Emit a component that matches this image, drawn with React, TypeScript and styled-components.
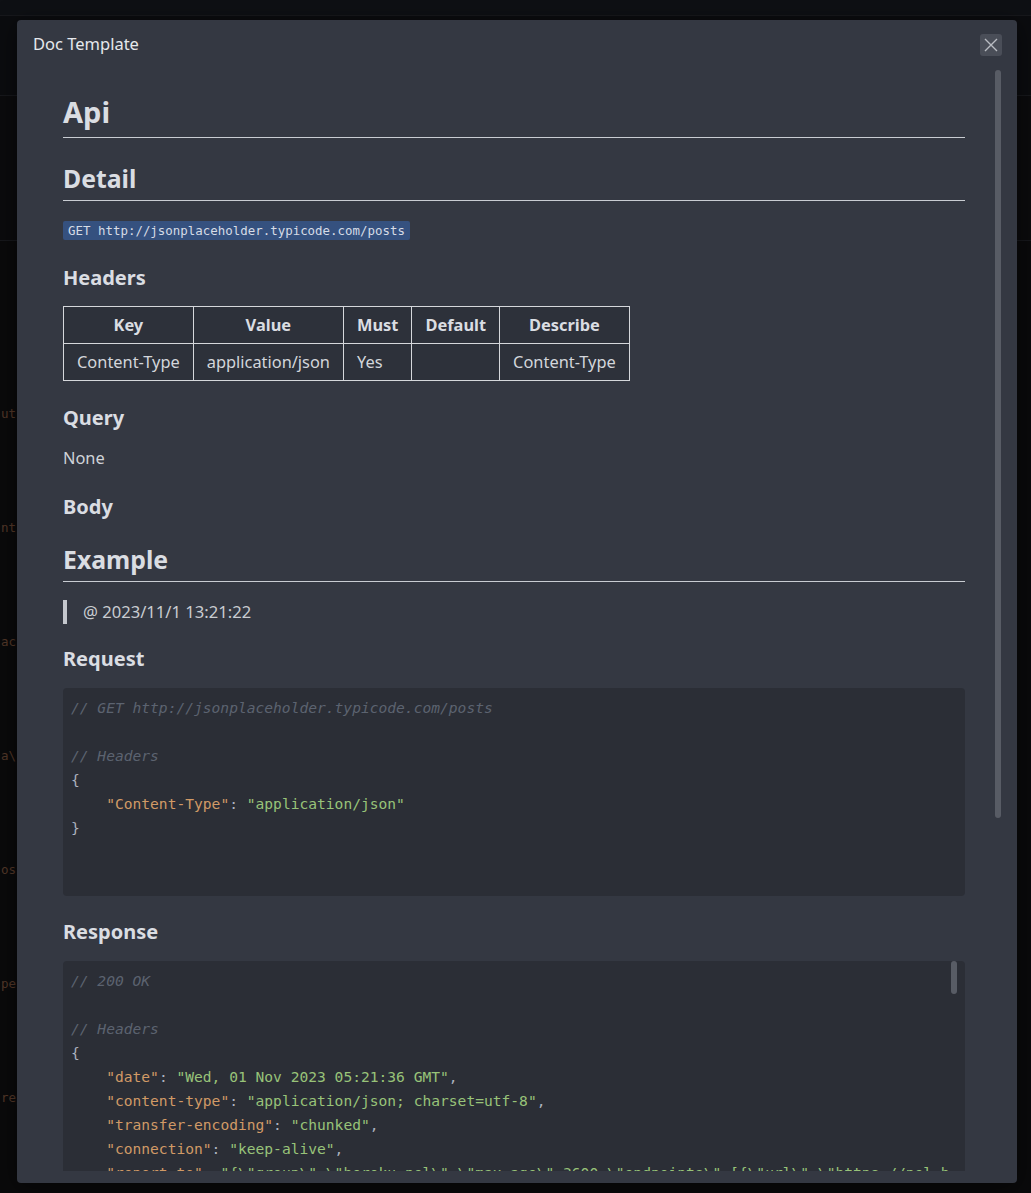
import React from 'react'
import styled, { createGlobalStyle } from 'styled-components'

type Kind = 'c' | 'k' | 's' | 'p' | 'n'
type Seg = [Kind, string]
type Line = Seg[]

const GlobalStyle = createGlobalStyle`
    html,
    body {
        margin: 0;
        padding: 0;
        background: #0a0a0b;
    }
    body {
        font-family: "Noto Sans", "Open Sans", sans-serif;
    }
`

const Page = styled.div`
    position: relative;
    width: 100%;
    height: 1193px;
    overflow: hidden;
    background: #0a0a0b;
`

const Backdrop = styled.div`
    display: flex;
    flex-direction: column;
    height: 100%;
`

const Band = styled.div<{ $h: number; $bg: string }>`
    height: ${(p) => p.$h}px;
    flex-shrink: 0;
    background: ${(p) => p.$bg};
    border-bottom: 1px solid #17181c;
`

const Ghost = styled.div`
    display: flex;
    flex-direction: column;
    padding-top: 115px;
    font-family: "DejaVu Sans Mono", monospace;
    font-size: 12.5px;
    color: #533829;
`

const GhostRow = styled.div`
    height: 114px;
    display: flex;
    align-items: center;
    padding-left: 1px;
    white-space: pre;
`

const Modal = styled.div`
    position: absolute;
    top: 20px;
    left: 17px;
    width: 1000px;
    height: 1163px;
    display: flex;
    flex-direction: column;
    padding-bottom: 12px;
    box-sizing: border-box;
    background: #343842;
    border-radius: 4px;
    box-shadow: 0 4px 24px rgba(0, 0, 0, 0.5);
`

const Header = styled.div`
    height: 50px;
    flex-shrink: 0;
    display: flex;
    align-items: center;
    justify-content: space-between;
    padding: 0 15px 0 16px;
`

const Title = styled.div`
    font-size: 16.5px;
    color: #e6e8ec;
    margin-top: -4px;
`

const Close = styled.button`
    width: 22px;
    height: 22px;
    padding: 0;
    border: none;
    border-radius: 3px;
    background: #4a4e58;
    display: flex;
    align-items: center;
    justify-content: center;
    cursor: pointer;
`

const Body = styled.div`
    flex: 1;
    min-height: 0;
    overflow: hidden;
    padding: 0 52px 17px 46px;
    color: #d0d3d8;
    font-size: 16.4px;
`

const Thumb = styled.div<{ $top: number; $right: number; $h: number }>`
    position: absolute;
    top: ${(p) => p.$top}px;
    right: ${(p) => p.$right}px;
    width: 6px;
    height: ${(p) => p.$h}px;
    border-radius: 3px;
    background: #585c65;
`

const H1 = styled.h1<{ $top: number }>`
    margin: ${(p) => p.$top}px 0 0;
    font-size: 29px;
    line-height: 40px;
    font-weight: 700;
    color: #dadde2;
    padding-bottom: 5px;
    border-bottom: 1px solid #c9ccd2;
`

const H2 = styled.h2<{ $top: number }>`
    margin: ${(p) => p.$top}px 0 0;
    font-size: 24.8px;
    line-height: 34px;
    font-weight: 700;
    color: #dadde2;
    padding-bottom: 5px;
    border-bottom: 1px solid #c9ccd2;
`

const H3 = styled.h3<{ $top: number }>`
    margin: ${(p) => p.$top}px 0 0;
    font-size: 20px;
    line-height: 28px;
    font-weight: 700;
    color: #dadde2;
`

const Para = styled.p<{ $top: number }>`
    margin: ${(p) => p.$top}px 0 0;
    line-height: 24px;
`

const InlineCode = styled.code`
    display: inline-block;
    height: 19px;
    line-height: 19px;
    padding: 0 5px;
    vertical-align: top;
    border-radius: 2px;
    background: #35517f;
    color: #d6dce6;
    font-family: "DejaVu Sans Mono", monospace;
    font-size: 12.45px;
`

const Table = styled.table`
    margin-top: 14px;
    border-collapse: collapse;
    background: #2d313a;
    color: #d3d6db;

    th,
    td {
        border: 1px solid #d5d7db;
        padding: 6px 13px;
        line-height: 24px;
        font-size: 16.4px;
    }
    th {
        font-weight: 700;
        text-align: center;
        color: #dadde2;
    }
    td {
        text-align: left;
    }
`

const Quote = styled.blockquote`
    margin: 18px 0 0;
    padding-left: 16px;
    border-left: 4px solid #c4c7cd;
    line-height: 24px;
    font-size: 16.6px;
    color: #c9ccd1;
`

const CodeBox = styled.div`
    margin-top: 15px;
    padding: 8px;
    border-radius: 4px;
    background: #2b2e36;
    overflow: hidden;
`

const ScrollBox = styled.div`
    position: relative;
    margin-top: 15px;
    padding-right: 14px;
    border-radius: 4px;
    background: #2b2e36;
`

const ScrollInner = styled.div`
    height: 712px;
    overflow: hidden;
    padding: 8px 0 8px 8px;
    box-sizing: border-box;
`

const CodeLine = styled.div`
    height: 24px;
    line-height: 24px;
    white-space: pre;
    font-family: "DejaVu Sans Mono", monospace;
    font-size: 14.6px;
    color: #abb2bf;
`

const tokenColors: Record<Kind, string> = {
    c: '#5c6370',
    k: '#d19a66',
    s: '#98c379',
    p: '#abb2bf',
    n: '#d19a66',
}

const Token = styled.span<{ $kind: Kind }>`
    color: ${(p) => tokenColors[p.$kind]};
    font-style: ${(p) => (p.$kind === 'c' ? 'italic' : 'normal')};
`

const comment = (t: string): Line => [['c', t]]
const blank: Line = []
const punct = (t: string): Line => [['p', t]]
const pair = (ind: string, k: string, v: string | number, last = false): Line => [
    ['p', ind],
    ['k', `"${k}"`],
    ['p', ': '],
    typeof v === 'number' ? ['n', String(v)] : ['s', JSON.stringify(v)],
    ['p', last ? '' : ','],
]

const requestLines: Line[] = [
    comment('// GET http://jsonplaceholder.typicode.com/posts'),
    blank,
    comment('// Headers'),
    punct('{'),
    pair('    ', 'Content-Type', 'application/json', true),
    punct('}'),
    blank,
    blank,
]

const sid = 'e11707d5-02a7-43ef-b45e-2cf4d2036f7d'
const headers: [string, string][] = [
    ['date', 'Wed, 01 Nov 2023 05:21:36 GMT'],
    ['content-type', 'application/json; charset=utf-8'],
    ['transfer-encoding', 'chunked'],
    ['connection', 'keep-alive'],
    [
        'report-to',
        `{"group":"heroku-nel","max_age":3600,"endpoints":[{"url":"https://nel.heroku.com/reports?ts=1698816096&sid=${sid}"}]}`,
    ],
    ['reporting-endpoints', `heroku-nel=https://nel.heroku.com/reports?ts=1698816096&sid=${sid}`],
    [
        'nel',
        '{"report_to":"heroku-nel","max_age":3600,"success_fraction":0.005,"failure_fraction":0.05,"response_headers":["Via"]}',
    ],
    ['x-powered-by', 'Express'],
    ['x-ratelimit-limit', '1000'],
    ['x-ratelimit-remaining', '999'],
    ['x-ratelimit-reset', '1698816141'],
    ['vary', 'Origin, Accept-Encoding'],
    ['access-control-allow-credentials', 'true'],
    ['cache-control', 'max-age=43200'],
    ['pragma', 'no-cache'],
    ['expires', '-1'],
    ['x-content-type-options', 'nosniff'],
    ['etag', 'W/"6b80-Ybsq/K6GwwqrYkAsFxqDXGC7DoM"'],
    ['via', '1.1 vegur'],
    ['cf-cache-status', 'HIT'],
    ['age', '6284'],
    ['server', 'cloudflare'],
    ['cf-ray', '81f0c3a7cbd1163a-HKG'],
    ['alt-svc', 'h3=":443"; ma=86400'],
]

const titles = [
    'sunt aut facere repellat provident occaecati excepturi optio reprehenderit',
    'qui est esse',
    'ea molestias quasi exercitationem repellat qui ipsa sit aut',
    'eum et est occaecati',
    'nesciunt quas odio',
]
const bodies = [
    'quia et suscipit\nsuscipit recusandae consequuntur expedita et cum\nreprehenderit molestiae ut ut quas totam',
    'est rerum tempore vitae\nsequi sint nihil reprehenderit dolor beatae ea dolores neque',
    'et iusto sed quo iure\nvoluptatem occaecati omnis eligendi aut ad',
]

// only the first lines are on screen, the rest just fills the scroll area
const responseLines: Line[] = [
    comment('// 200 OK'),
    blank,
    comment('// Headers'),
    punct('{'),
    ...headers.map(([k, v], i) => pair('    ', k, v, i === headers.length - 1)),
    punct('}'),
    blank,
    comment('// Body'),
    punct('['),
]
for (let id = 1; id <= 4; id++) {
    responseLines.push(punct('    {'))
    responseLines.push(pair('        ', 'userId', 1))
    responseLines.push(pair('        ', 'id', id))
    responseLines.push(pair('        ', 'title', titles[id % titles.length]))
    responseLines.push(pair('        ', 'body', bodies[id % bodies.length], true))
    responseLines.push(punct('    },'))
}

function Code({ lines }: { lines: Line[] }) {
    return (
        <>
            {lines.map((line, i) => (
                <CodeLine key={i}>
                    {line.map(([kind, text], j) => (
                        <Token key={j} $kind={kind}>
                            {text}
                        </Token>
                    ))}
                </CodeLine>
            ))}
        </>
    )
}

const ghostText = ['ut', 'nt', 'ac', 'a\\', 'oss', 'per', 'rep']

function App() {
    return (
        <Page>
            <GlobalStyle />
            <Backdrop>
                <Band $h={15} $bg="#0e1014" />
                <Band $h={79} $bg="#0b0c0f" />
                <Band $h={144} $bg="#0b0b0d" />
                <Ghost>
                    {ghostText.map((t) => (
                        <GhostRow key={t}>{t}</GhostRow>
                    ))}
                </Ghost>
            </Backdrop>

            <Modal>
                <Header>
                    <Title>Doc Template</Title>
                    <Close aria-label="close">
                        <svg width="14" height="14" viewBox="0 0 14 14">
                            <path d="M1 1L13 13M13 1L1 13" stroke="#b9bcc2" strokeWidth="1.4" />
                        </svg>
                    </Close>
                </Header>
                <Body>
                    <H1 $top={22}>Api</H1>
                    <H2 $top={23}>Detail</H2>
                    <Para $top={20}>
                        <InlineCode>GET http://jsonplaceholder.typicode.com/posts</InlineCode>
                    </Para>
                    <H3 $top={19}>Headers</H3>
                    <Table>
                        <thead>
                            <tr>
                                <th>Key</th>
                                <th>Value</th>
                                <th>Must</th>
                                <th>Default</th>
                                <th>Describe</th>
                            </tr>
                        </thead>
                        <tbody>
                            <tr>
                                <td>Content-Type</td>
                                <td>application/json</td>
                                <td>Yes</td>
                                <td></td>
                                <td>Content-Type</td>
                            </tr>
                        </tbody>
                    </Table>
                    <H3 $top={23}>Query</H3>
                    <Para $top={14}>None</Para>
                    <H3 $top={23}>Body</H3>
                    <H2 $top={21}>Example</H2>
                    <Quote>@ 2023/11/1 13:21:22</Quote>
                    <H3 $top={21}>Request</H3>
                    <CodeBox>
                        <Code lines={requestLines} />
                    </CodeBox>
                    <H3 $top={22}>Response</H3>
                    <ScrollBox>
                        <ScrollInner>
                            <Code lines={responseLines} />
                        </ScrollInner>
                        <Thumb $top={0} $right={8} $h={33} />
                    </ScrollBox>
                </Body>
                <Thumb $top={50} $right={16} $h={748} />
            </Modal>
        </Page>
    )
}

export default App
